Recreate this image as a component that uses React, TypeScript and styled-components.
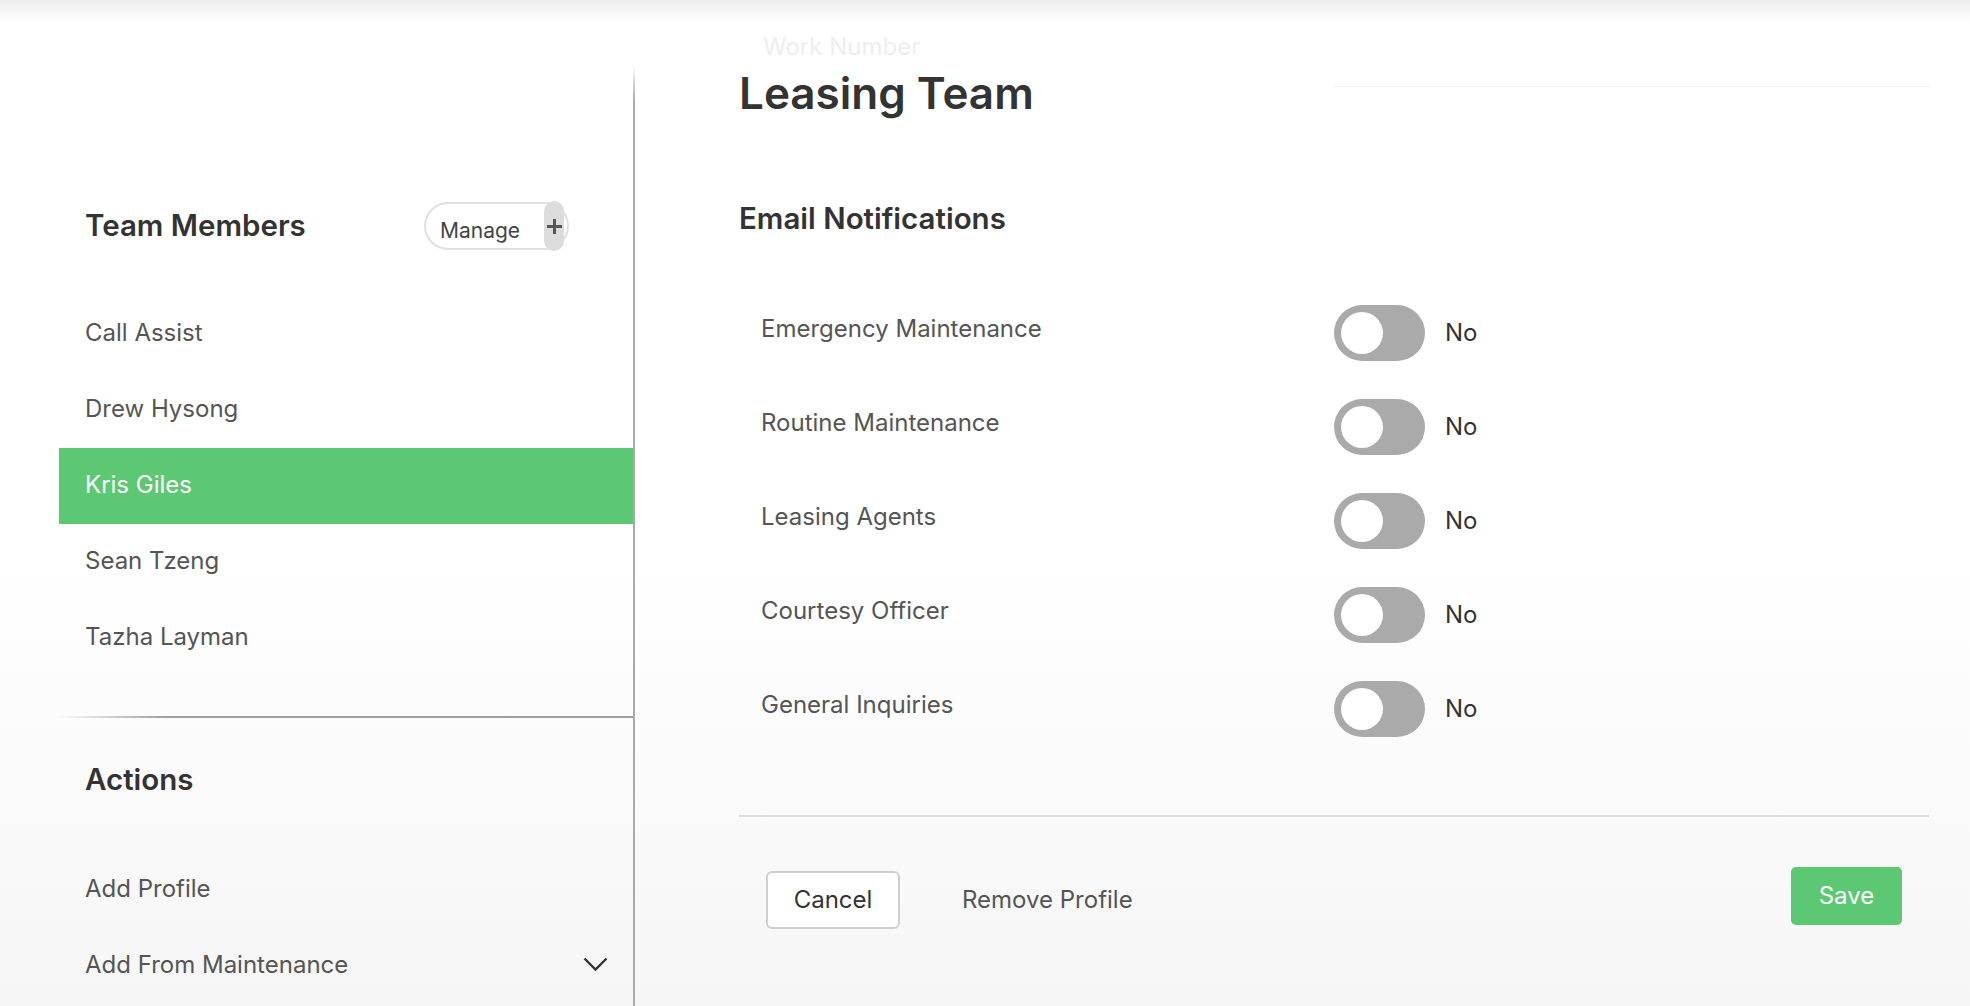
import React from 'react';
import styled, { createGlobalStyle } from 'styled-components';

const GlobalStyle = createGlobalStyle`
  html, body {
    margin: 0;
    padding: 0;
    height: 100%;
    overflow: hidden;
  }
  body {
    font-family: Inter, "Liberation Sans", Arial, sans-serif;
    background: linear-gradient(to bottom, #ffffff 0%, #ffffff 55%, #f6f6f6 100%);
    color: #333;
  }
  * {
    box-sizing: border-box;
  }
`;

const Page = styled.div`
  display: flex;
  flex-direction: column;
  width: 1970px;
  height: 1006px;
`;

const TopShade = styled.div`
  height: 22px;
  flex-shrink: 0;
  background: linear-gradient(to bottom, #ededed 0%, rgba(255, 255, 255, 0) 100%);
`;

const Main = styled.div`
  display: flex;
  flex: 1;
  min-height: 0;
`;

/* ---------- sidebar ---------- */

const Sidebar = styled.aside`
  width: 635px;
  flex-shrink: 0;
  padding-left: 59px;
  border-right: 2px solid #aaa;
  border-image: linear-gradient(to bottom, rgba(170, 170, 170, 0) 0, rgba(170, 170, 170, 0) 44px, #aaa 80px) 1;
  display: flex;
  flex-direction: column;
`;

const SidebarHeader = styled.div`
  display: flex;
  align-items: center;
  justify-content: space-between;
  height: 48px;
  margin-top: 180px;
  padding: 0 64px 0 26px;
`;

const SectionTitle = styled.h3`
  margin: 0;
  font-size: 29.5px;
  line-height: 1.2;
  font-weight: 600;
  color: #333;
`;

const ManagePill = styled.button`
  display: flex;
  align-items: center;
  width: 145px;
  height: 48px;
  padding: 0 3px 0 14px;
  border: 2px solid #e0e0e0;
  border-radius: 24px;
  background: #fff;
  font-family: inherit;
  font-size: 21px;
  color: #444;
  cursor: pointer;
`;

const ManageLabel = styled.span`
  margin-right: auto;
  padding-top: 8px;
`;

const PlusTab = styled.span`
  display: flex;
  align-items: center;
  justify-content: center;
  width: 20px;
  height: 50px;
  margin: -4px 0;
  border-radius: 10px;
  background: #dcdcdc;
`;

const MemberList = styled.ul`
  list-style: none;
  margin: 46px 0 0 0;
  padding: 0;
`;

const MemberRow = styled.li<{ $active?: boolean }>`
  display: flex;
  align-items: center;
  height: 76px;
  padding-left: 26px;
  padding-bottom: 3px;
  font-size: 24px;
  color: ${(p) => (p.$active ? '#fff' : '#555')};
  background: ${(p) => (p.$active ? '#5cc873' : 'transparent')};
  cursor: pointer;
`;

const SidebarDivider = styled.div`
  height: 2px;
  margin-top: 40px;
  background: linear-gradient(to right, rgba(150, 150, 150, 0) 0, #9c9c9c 110px);
`;

const ActionsTitle = styled(SectionTitle)`
  margin-top: 44px;
  padding-left: 26px;
`;

const ActionList = styled.ul`
  list-style: none;
  margin: 53px 0 0 0;
  padding: 0;
`;

const ActionRow = styled.li`
  display: flex;
  align-items: center;
  justify-content: space-between;
  height: 76px;
  padding: 0 25px 0 26px;
  font-size: 24px;
  color: #555;
  cursor: pointer;
`;

/* ---------- content ---------- */

const Content = styled.section`
  flex: 1;
  padding: 0 41px 0 104px;
  display: flex;
  flex-direction: column;
`;

const FormRemnant = styled.div`
  display: grid;
  grid-template-columns: 1fr 1fr;
  height: 54px;
  margin-top: 11px;
`;

const GhostField = styled.div<{ $underline?: boolean }>`
  padding-left: 24px;
  font-size: 24px;
  line-height: 1.2;
  color: #eeeeee;
  border-bottom: 1px solid ${(p) => (p.$underline ? '#f1f1f1' : 'transparent')};
`;

const PageTitle = styled.h1`
  position: relative;
  margin: -18px 0 0 0;
  font-size: 44px;
  line-height: 1.1;
  font-weight: 600;
  color: #333;
`;

const NotifTitle = styled(SectionTitle)`
  margin-top: 84px;
`;

const NotifList = styled.div`
  margin-top: 49px;
  display: flex;
  flex-direction: column;
`;

const NotifRow = styled.div`
  display: grid;
  grid-template-columns: 1fr 1fr;
  align-items: center;
  height: 94px;
`;

const NotifLabel = styled.span`
  padding-left: 22px;
  margin-bottom: 8px;
  font-size: 24px;
  color: #555;
`;

const ToggleWrap = styled.label`
  display: flex;
  align-items: center;
  gap: 20px;
  font-size: 24px;
  color: #333;
  cursor: pointer;
`;

const Track = styled.span<{ $on: boolean }>`
  display: flex;
  justify-content: ${(p) => (p.$on ? 'flex-end' : 'flex-start')};
  width: 91px;
  height: 56px;
  padding: 7px;
  border-radius: 28px;
  background: ${(p) => (p.$on ? '#5cc873' : '#aaaaaa')};
`;

const Knob = styled.span`
  width: 42px;
  height: 42px;
  border-radius: 50%;
  background: #fff;
`;

const FooterDivider = styled.div`
  height: 2px;
  margin-top: 59px;
  background: #dddddd;
`;

const Footer = styled.div`
  display: flex;
  align-items: flex-start;
  padding: 50px 27px 0 27px;
`;

const CancelButton = styled.button`
  width: 134px;
  height: 58px;
  margin-top: 4px;
  border: 2px solid #cfcfcf;
  border-radius: 6px;
  background: #fff;
  font-family: inherit;
  font-size: 24px;
  color: #333;
  cursor: pointer;
`;

const LinkButton = styled.button`
  height: 58px;
  margin: 4px 0 0 62px;
  padding: 0;
  border: none;
  background: transparent;
  font-family: inherit;
  font-size: 24px;
  color: #555;
  cursor: pointer;
`;

const SaveButton = styled.button`
  width: 111px;
  height: 58px;
  margin-left: auto;
  border: none;
  border-radius: 5px;
  background: #5cc873;
  font-family: inherit;
  font-size: 24px;
  color: #fff;
  cursor: pointer;
`;

const PlusIcon = () => (
  <svg width="17" height="17" viewBox="0 0 17 17">
    <path d="M8.5 1v15M1 8.5h15" stroke="#555" strokeWidth="3" />
  </svg>
);

const ChevronIcon = () => (
  <svg width="25" height="15" viewBox="0 0 25 15" fill="none">
    <path d="M1.5 1.5l11 11 11-11" stroke="#333" strokeWidth="2.4" />
  </svg>
);

const members = ['Call Assist', 'Drew Hysong', 'Kris Giles', 'Sean Tzeng', 'Tazha Layman'];

const notifications = [
  'Emergency Maintenance',
  'Routine Maintenance',
  'Leasing Agents',
  'Courtesy Officer',
  'General Inquiries',
];

const App: React.FC = () => {
  const selected = 'Kris Giles';

  return (
    <>
      <GlobalStyle />
      <Page>
        <TopShade />
        <Main>
          <Sidebar>
            <SidebarHeader>
              <SectionTitle>Team Members</SectionTitle>
              <ManagePill>
                <ManageLabel>Manage</ManageLabel>
                <PlusTab>
                  <PlusIcon />
                </PlusTab>
              </ManagePill>
            </SidebarHeader>

            <MemberList>
              {members.map((name) => (
                <MemberRow key={name} $active={name === selected}>
                  {name}
                </MemberRow>
              ))}
            </MemberList>

            <SidebarDivider />

            <ActionsTitle>Actions</ActionsTitle>
            <ActionList>
              <ActionRow>Add Profile</ActionRow>
              <ActionRow>
                <span>Add From Maintenance</span>
                <ChevronIcon />
              </ActionRow>
            </ActionList>
          </Sidebar>

          <Content>
            <FormRemnant>
              <GhostField>Work Number</GhostField>
              <GhostField $underline />
            </FormRemnant>

            <PageTitle>Leasing Team</PageTitle>

            <NotifTitle>Email Notifications</NotifTitle>

            <NotifList>
              {notifications.map((label) => (
                <NotifRow key={label}>
                  <NotifLabel>{label}</NotifLabel>
                  <ToggleWrap>
                    <Track $on={false}>
                      <Knob />
                    </Track>
                    No
                  </ToggleWrap>
                </NotifRow>
              ))}
            </NotifList>

            <FooterDivider />

            <Footer>
              <CancelButton>Cancel</CancelButton>
              <LinkButton>Remove Profile</LinkButton>
              <SaveButton>Save</SaveButton>
            </Footer>
          </Content>
        </Main>
      </Page>
    </>
  );
};

export default App;
